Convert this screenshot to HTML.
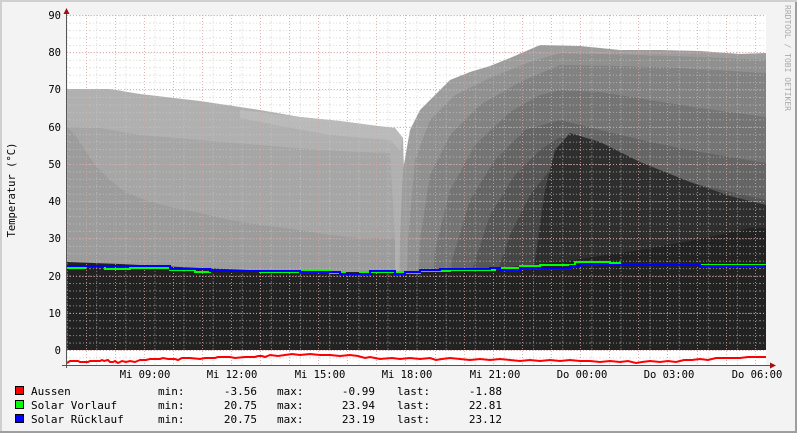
<!DOCTYPE html>
<html><head><meta charset="utf-8"><style>
html,body{margin:0;padding:0;background:#f3f3f3;}
body{width:797px;height:433px;overflow:hidden;position:relative;font-family:"DejaVu Sans Mono","Liberation Mono",monospace;}
</style></head><body>
<svg width="797" height="433" xmlns="http://www.w3.org/2000/svg" style="position:absolute;left:0;top:0" font-family="DejaVu Sans Mono, Liberation Mono, monospace">
<defs>
<pattern id="gmin" x="67" y="0" width="29.13" height="7.44" patternUnits="userSpaceOnUse">
<line x1="0.5" y1="0" x2="0.5" y2="7.44" stroke="#c8c8c8" stroke-opacity="0.6" stroke-width="1" stroke-dasharray="1,2"/>
</pattern>
<pattern id="gh" x="0" y="15.2" width="10" height="7.44" patternUnits="userSpaceOnUse">
<line x1="0" y1="0.5" x2="10" y2="0.5" stroke="#c8c8c8" stroke-opacity="0.6" stroke-width="1" stroke-dasharray="1,2"/>
</pattern>
</defs>
<rect x="0" y="0" width="797" height="433" fill="#f3f3f3"/>
<rect x="795" y="0" width="2" height="433" fill="#9e9e9e"/>
<rect x="0" y="431" width="797" height="2" fill="#9e9e9e"/>
<rect x="0" y="0" width="2" height="431" fill="#cfcfcf"/>
<rect x="0" y="0" width="797" height="2" fill="#cfcfcf"/>
<rect x="67" y="15" width="699" height="350" fill="#ffffff"/>
<polygon fill="#b0b0b0" points="67,89 110,89 140,94 200,101 260,110 300,117 340,121 370,125 395,128 403,138 406,238 406,350 67,350"/>
<polygon fill="#bababa" points="240,110 300,117 340,121 370,125 395,128 403,138 400,150 390,140 330,135 280,126 240,118"/>
<polygon fill="#a6a6a6" points="67,127 100,128 140,135 200,140 260,145 320,150 360,152 390,153 395,238 67,350"/>
<polygon fill="#9c9c9c" points="67,127 75,135 85,150 95,165 110,180 125,192 145,200 170,207 200,213 230,220 260,225 300,230 330,235 360,238 395,238 395,350 67,350"/>
<polygon fill="#9d9d9d" points="398,350 400,238 403,170 410,130 420,110 435,95 450,80 470,72 490,66 510,58 540,45 580,46 620,50 660,50 700,51 740,54 766,53 766,350"/>
<polygon fill="#909090" points="405,350 408,240 415,160 430,120 455,95 490,78 530,62 560,53 640,55 700,57 766,60 766,350"/>
<polygon fill="#828282" points="415,350 420,240 430,175 450,135 480,105 520,82 560,65 620,66 680,68 766,73 766,350"/>
<polygon fill="#747474" points="428,350 435,250 450,190 475,145 510,112 540,95 560,90 600,92 650,100 700,108 766,117 766,350"/>
<polygon fill="#656565" points="445,350 452,260 470,200 495,160 525,130 560,120 600,130 650,142 700,152 766,163 766,350"/>
<polygon fill="#565656" points="465,350 472,270 490,215 515,175 540,150 560,137 600,150 650,170 700,185 766,200 766,350"/>
<polygon fill="#454545" points="485,350 495,280 510,235 530,195 550,170 570,160 600,170 650,190 700,205 766,215 766,350"/>
<polygon fill="#2e2e2e" points="525,350 535,260 545,190 555,150 570,133 600,142 640,162 690,182 730,196 766,205 766,350"/>
<polygon fill="#222222" points="67,262 120,264 200,268 300,272 400,272 500,268 560,262 600,256 640,250 680,243 720,235 750,228 766,228 766,350 67,350"/>
<rect x="67" y="15" width="699" height="350" fill="url(#gmin)"/>
<rect x="67" y="15" width="699" height="350" fill="url(#gh)"/>
<g stroke="#d9a0a0" stroke-opacity="0.8" stroke-width="1" stroke-dasharray="1,2">
<line x1="67" y1="15.5" x2="766" y2="15.5"/><line x1="67" y1="52.5" x2="766" y2="52.5"/>
<line x1="67" y1="89.5" x2="766" y2="89.5"/><line x1="67" y1="127.5" x2="766" y2="127.5"/>
<line x1="67" y1="164.5" x2="766" y2="164.5"/><line x1="67" y1="201.5" x2="766" y2="201.5"/>
<line x1="67" y1="238.5" x2="766" y2="238.5"/><line x1="67" y1="276.5" x2="766" y2="276.5"/>
<line x1="67" y1="313.5" x2="766" y2="313.5"/><line x1="67" y1="350.5" x2="766" y2="350.5"/>
<line x1="86.5" y1="15" x2="86.5" y2="365"/><line x1="115.5" y1="15" x2="115.5" y2="365"/><line x1="144.5" y1="15" x2="144.5" y2="365"/><line x1="173.5" y1="15" x2="173.5" y2="365"/><line x1="202.5" y1="15" x2="202.5" y2="365"/><line x1="231.5" y1="15" x2="231.5" y2="365"/><line x1="260.5" y1="15" x2="260.5" y2="365"/><line x1="289.5" y1="15" x2="289.5" y2="365"/><line x1="318.5" y1="15" x2="318.5" y2="365"/><line x1="347.5" y1="15" x2="347.5" y2="365"/><line x1="376.5" y1="15" x2="376.5" y2="365"/><line x1="405.5" y1="15" x2="405.5" y2="365"/><line x1="435.5" y1="15" x2="435.5" y2="365"/><line x1="464.5" y1="15" x2="464.5" y2="365"/><line x1="493.5" y1="15" x2="493.5" y2="365"/><line x1="522.5" y1="15" x2="522.5" y2="365"/><line x1="551.5" y1="15" x2="551.5" y2="365"/><line x1="580.5" y1="15" x2="580.5" y2="365"/><line x1="609.5" y1="15" x2="609.5" y2="365"/><line x1="638.5" y1="15" x2="638.5" y2="365"/><line x1="667.5" y1="15" x2="667.5" y2="365"/><line x1="697.5" y1="15" x2="697.5" y2="365"/><line x1="726.5" y1="15" x2="726.5" y2="365"/><line x1="755.5" y1="15" x2="755.5" y2="365"/>
</g>
<polyline fill="none" stroke="#00ff00" stroke-width="2" points="67,268 85,268 85,266 105,266 105,269 130,269 130,268 170,268 170,270 195,270 195,272 210,272 210,271 260,271 260,272 300,272 300,271 330,271 330,273 345,273 345,274 360,274 360,272 400,272 400,273 420,273 420,271 450,271 450,270 495,270 495,268 520,268 520,266 540,266 540,265 575,265 575,262 610,262 610,263 620,263 620,265 766,265"/>
<polyline fill="none" stroke="#0000ff" stroke-width="2" points="67,266 170,266 170,269 210,269 210,271 300,271 300,272 340,272 340,274 370,274 370,271 395,271 395,274 405,274 405,272 420,272 420,270 440,270 440,269 490,269 490,268 500,268 500,270 520,270 520,268 570,268 570,266 580,266 580,264 600,264 600,265 700,265 700,266 766,266"/>
<polyline fill="none" stroke="#ff0000" stroke-width="2" points="67,363 70,361 78,361 80,362 88,362 90,361 100,361 102,360 104,361 108,360 110,362 113,362 115,361 118,363 122,361 126,362 130,361 135,362 140,360 146,360 150,359 160,359 163,358 168,359 175,359 178,360 182,358 190,358 200,359 205,358 215,358 218,357 230,357 235,358 245,357 255,357 258,356 262,356 265,357 270,355 278,356 285,355 292,354 300,355 310,354 320,355 330,355 340,356 350,355 358,356 365,358 370,357 380,359 392,358 400,359 410,358 420,359 430,358 436,360 442,359 450,358 460,359 470,360 480,359 490,360 500,359 510,360 520,361 530,360 540,361 550,360 560,361 570,360 580,361 590,361 600,362 610,361 620,362 628,361 636,363 642,362 650,361 660,362 668,361 676,362 684,360 692,360 700,359 708,360 716,358 730,358 740,358 748,357 766,357"/>
<line x1="66.5" y1="10" x2="66.5" y2="368" stroke="#555" stroke-width="1"/>
<line x1="62" y1="365.5" x2="770" y2="365.5" stroke="#555" stroke-width="1"/>
<polygon points="63.5,14 69.5,14 66.5,8" fill="#a01010"/>
<polygon points="770,362.5 770,368.5 776,365.5" fill="#a01010"/>
<g fill="#000" font-size="10.5" text-anchor="end">
<text x="61" y="19">90</text><text x="61" y="56">80</text><text x="61" y="93">70</text><text x="61" y="131">60</text><text x="61" y="168">50</text><text x="61" y="205">40</text><text x="61" y="242">30</text><text x="61" y="280">20</text><text x="61" y="317">10</text><text x="61" y="354">0</text>
</g>
<g fill="#000" font-size="10.5" text-anchor="middle">
<text x="145" y="378">Mi 09:00</text><text x="232" y="378">Mi 12:00</text><text x="320" y="378">Mi 15:00</text><text x="407" y="378">Mi 18:00</text><text x="495" y="378">Mi 21:00</text><text x="582" y="378">Do 00:00</text><text x="669" y="378">Do 03:00</text><text x="757" y="378">Do 06:00</text>
</g>
<text transform="translate(15,190) rotate(-90)" text-anchor="middle" font-size="10.5" fill="#000">Temperatur (°C)</text>
<text transform="translate(785,5) rotate(90)" font-size="8" fill="#aaa">RRDTOOL / TOBI OETIKER</text>
<rect x="15.5" y="386.5" width="8" height="8" fill="#ff0000" stroke="#000"/>
<rect x="15.5" y="400.5" width="8" height="8" fill="#00ff00" stroke="#000"/>
<rect x="15.5" y="414.5" width="8" height="8" fill="#0000ff" stroke="#000"/>
<g fill="#000" font-size="11">
<text x="31" y="395">Aussen</text><text x="31" y="409">Solar Vorlauf</text><text x="31" y="423">Solar Rücklauf</text>
<text x="158" y="395">min:</text><text x="158" y="409">min:</text><text x="158" y="423">min:</text>
<text x="277" y="395">max:</text><text x="277" y="409">max:</text><text x="277" y="423">max:</text>
<text x="397" y="395">last:</text><text x="397" y="409">last:</text><text x="397" y="423">last:</text>
</g>
<g fill="#000" font-size="11" text-anchor="end">
<text x="257" y="395">-3.56</text><text x="257" y="409">20.75</text><text x="257" y="423">20.75</text>
<text x="375" y="395">-0.99</text><text x="375" y="409">23.94</text><text x="375" y="423">23.19</text>
<text x="502" y="395">-1.88</text><text x="502" y="409">22.81</text><text x="502" y="423">23.12</text>
</g>
</svg>
</body></html>
